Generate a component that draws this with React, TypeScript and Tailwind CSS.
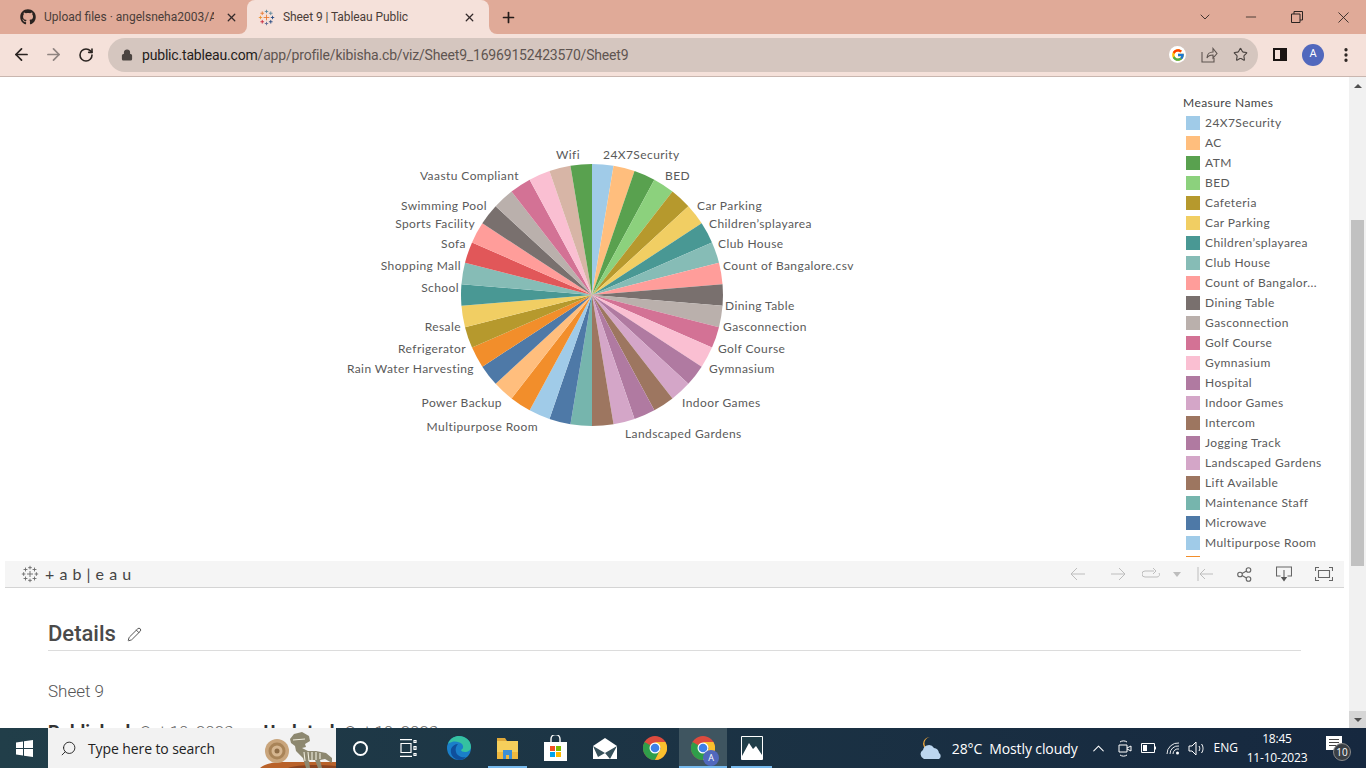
import { ArrowLeft, ArrowRight, RotateCw, Lock, Star, ChevronDown, Minus, X, Plus, ChevronUp, Search, MoreVertical, Pencil } from "lucide-react";
import { FaGithub } from "react-icons/fa";
import { FcGoogle } from "react-icons/fc";

const legend = [
  ["24X7Security", "#a0cbe8"],
  ["AC", "#ffbe7d"],
  ["ATM", "#59a14f"],
  ["BED", "#8cd17d"],
  ["Cafeteria", "#b6992d"],
  ["Car Parking", "#f1ce63"],
  ["Children’splayarea", "#499894"],
  ["Club House", "#86bcb6"],
  ["Count of Bangalor...", "#ff9d9a"],
  ["Dining Table", "#79706e"],
  ["Gasconnection", "#bab0ac"],
  ["Golf Course", "#d37295"],
  ["Gymnasium", "#fabfd2"],
  ["Hospital", "#b07aa1"],
  ["Indoor Games", "#d4a6c8"],
  ["Intercom", "#9d7660"],
  ["Jogging Track", "#b07aa1"],
  ["Landscaped Gardens", "#d4a6c8"],
  ["Lift Available", "#9d7660"],
  ["Maintenance Staff", "#76b5ad"],
  ["Microwave", "#4e79a7"],
  ["Multipurpose Room", "#a0cbe8"],
  ["", "#f28e2b"],
];

// clockwise from 12 o'clock, all slices equal
const slices = [
  "#a0cbe8", "#ffbe7d", "#59a14f", "#8cd17d", "#b6992d", "#f1ce63", "#499894", "#86bcb6", "#ff9d9a", "#79706e",
  "#bab0ac", "#d37295", "#fabfd2", "#b07aa1", "#d4a6c8", "#9d7660", "#b07aa1", "#d4a6c8", "#9d7660", "#76b5ad",
  "#4e79a7", "#a0cbe8", "#f28e2b", "#ffbe7d", "#4e79a7", "#f28e2b", "#b6992d", "#f1ce63", "#499894", "#86bcb6",
  "#e15759", "#ff9d9a", "#79706e", "#bab0ac", "#d37295", "#fabfd2", "#d7b5a6", "#59a14f",
];

const labels: [string, number, number, "start" | "end"][] = [
  ["24X7Security", 603, 155, "start"],
  ["BED", 665, 176, "start"],
  ["Car Parking", 697, 206, "start"],
  ["Children’splayarea", 709, 224, "start"],
  ["Club House", 718, 244, "start"],
  ["Count of Bangalore.csv", 723, 266, "start"],
  ["Dining Table", 725, 306, "start"],
  ["Gasconnection", 723, 327, "start"],
  ["Golf Course", 718, 349, "start"],
  ["Gymnasium", 709, 369, "start"],
  ["Indoor Games", 682, 403, "start"],
  ["Landscaped Gardens", 625, 434, "start"],
  ["Wifi", 580, 155, "end"],
  ["Vaastu Compliant", 519, 176, "end"],
  ["Swimming Pool", 487, 206, "end"],
  ["Sports Facility", 475, 224, "end"],
  ["Sofa", 466, 244, "end"],
  ["Shopping Mall", 461, 266, "end"],
  ["School", 459, 288, "end"],
  ["Resale", 461, 327, "end"],
  ["Refrigerator", 466, 349, "end"],
  ["Rain Water Harvesting", 474, 369, "end"],
  ["Power Backup", 502, 403, "end"],
  ["Multipurpose Room", 538, 427, "end"],
];

function slicePath(i: number) {
  const cx = 252, cy = 155, r = 131;
  const a0 = (i / slices.length) * 2 * Math.PI;
  const a1 = ((i + 1) / slices.length) * 2 * Math.PI;
  const x0 = cx + r * Math.sin(a0), y0 = cy - r * Math.cos(a0);
  const x1 = cx + r * Math.sin(a1), y1 = cy - r * Math.cos(a1);
  return `M${cx} ${cy}L${x0} ${y0}A${r} ${r} 0 0 1 ${x1} ${y1}Z`;
}

function PieChart() {
  return (
    <svg width="530" height="310" viewBox="0 0 530 310" className="block font-['Lato',sans-serif] text-[12px] tracking-[0.42px]">
      {slices.map((c, i) => <path key={i} d={slicePath(i)} fill={c} />)}
      {labels.map(([t, x, y, a]) => (
        <text key={t} x={x - 340} y={y - 140 + 4} textAnchor={a} fill="#5a5a5a">{t}</text>
      ))}
    </svg>
  );
}

function TableauMark({ size, color }: { size: number; color?: string }) {
  const crosses: [number, number, number, string][] = [
    [12, 12, 4, "#e8762d"], [12, 3.5, 2.4, "#59879b"], [12, 20.5, 2.4, "#5b6591"],
    [3.5, 12, 2.4, "#eb912c"], [20.5, 12, 2.4, "#1f447e"], [6, 6, 2.6, "#e8762d"],
    [18, 6, 2.6, "#59879b"], [6, 18, 2.6, "#c72035"], [18, 18, 2.6, "#1f447e"],
  ];
  return (
    <svg width={size} height={size} viewBox="0 0 24 24">
      {crosses.map(([x, y, s, c], i) => (
        <path key={i} d={`M${x - s} ${y}H${x + s}M${x} ${y - s}V${y + s}`} stroke={color ?? c} strokeWidth="1.2" />
      ))}
    </svg>
  );
}

function ChromeBar() {
  return (
    <div className="shrink-0 font-['Roboto',sans-serif]">
      <div className="h-[34px] bg-[#e0aa98] flex items-end">
        <div className="w-[247px] h-[34px] flex items-center pl-[20px] text-[#4a3d38]">
          <FaGithub className="text-[16px] text-[#2a2320] shrink-0" />
          <span className="w-[170px] ml-[8px] text-[12px] whitespace-nowrap overflow-hidden">Upload files · angelsneha2003/A</span>
          <X size={13} strokeWidth={2.4} className="ml-[11px] text-[#33292a]" />
        </div>
        <div className="relative w-[242px] h-[34px] bg-[#f5e1da] rounded-t-lg flex items-center pl-[11px] text-[#4a3d38]">
          <div className="absolute -left-2 bottom-0 w-2 h-2 bg-[#f5e1da]"><div className="w-2 h-2 bg-[#e0aa98] rounded-br-lg" /></div>
          <div className="absolute -right-2 bottom-0 w-2 h-2 bg-[#f5e1da]"><div className="w-2 h-2 bg-[#e0aa98] rounded-bl-lg" /></div>
          <TableauMark size={17} />
          <span className="ml-[8px] w-[180px] text-[12px] tracking-[-0.08px] whitespace-nowrap">Sheet 9 | Tableau Public</span>
          <X size={13} strokeWidth={2.4} className="text-[#33292a]" />
        </div>
        <div className="h-[34px] ml-[11px] flex items-center">
          <Plus size={17} strokeWidth={2.4} className="text-[#241c1a]" />
        </div>
        <div className="ml-auto h-[34px] flex items-center text-[#2a2320]">
          <div className="w-[46px] flex justify-center"><ChevronDown size={16} strokeWidth={1.3} /></div>
          <div className="w-[46px] flex justify-center"><Minus size={16} strokeWidth={1.2} /></div>
          <div className="w-[46px] flex justify-center">
            <svg width="12" height="12" viewBox="0 0 12 12" fill="none" stroke="currentColor"><path d="M.5 3h8.500v8.500H.5zM3 3V.5h8.500V9H9" /></svg>
          </div>
          <div className="w-[46px] flex justify-center"><X size={19} strokeWidth={1.1} /></div>
        </div>
      </div>
      <div className="h-[43px] bg-[#f5e1da] border-b border-[#c9b6af] flex items-center pb-[1px] text-[#2a2320]">
        <ArrowLeft size={19} strokeWidth={2.2} className="ml-[12px]" />
        <ArrowRight size={19} strokeWidth={2.2} className="ml-[13px] text-[#8f8480]" />
        <RotateCw size={16} strokeWidth={2.4} className="ml-[15px]" />
        <div className="ml-[14px] w-[1150px] h-[34px] rounded-full bg-[#d5c6bf] flex items-center">
          <Lock size={12} strokeWidth={2.4} fill="#4b4441" className="ml-[13px] text-[#4b4441]" />
          <span className="ml-[9px] pt-[1px] text-[14px] tracking-[-0.18px] whitespace-nowrap text-[#5f5551]"><span className="text-[#241c1a]">public.tableau.com</span>/app/profile/kibisha.cb/viz/Sheet9_16969152423570/Sheet9</span>
          <div className="ml-auto flex items-center">
            <div className="w-[17px] h-[17px] rounded-full bg-white flex items-center justify-center"><FcGoogle size={14} /></div>
            <svg width="17" height="16" viewBox="0 0 17 16" fill="none" stroke="#5f5551" strokeWidth="1.1" className="ml-[15px]"><path d="M1 5v10h12v-4M6 11c0-4 3-6 6-6V1.500l4 5-4 4.500V8c-3 0-5 1-6 3z" /></svg>
            <Star size={15} strokeWidth={1.8} className="ml-[15px] mr-[10px] text-[#4b4441]" />
          </div>
        </div>
        <div className="ml-[15px] w-[14px] h-[13px] border-[2px] border-[#1a1412] bg-[linear-gradient(to_right,#f5e1da_50%,#1a1412_50%)]" />
        <div className="ml-[15px] w-[22px] h-[22px] rounded-full bg-[#5168bd] text-white text-[11px] flex items-center justify-center">A</div>
        <MoreVertical size={18} strokeWidth={2.4} className="ml-[13px]" />
      </div>
    </div>
  );
}

function Legend() {
  return (
    <div className="w-[166px] h-[480px] overflow-hidden font-['Lato',sans-serif] text-[12px] tracking-[0.42px] text-[#5a5a5a]">
      <div className="h-[16px] mt-[18px] leading-[16px] text-[#444444]">Measure Names</div>
      <div className="mt-[2px]">
        {legend.map(([name, c]) => (
          <div key={c + name} className="h-[20px] flex items-center pl-[3px]">
            <div className="w-[14px] h-[14px] shrink-0" style={{ backgroundColor: c }} />
            <span className="ml-[5px] whitespace-nowrap">{name}</span>
          </div>
        ))}
      </div>
    </div>
  );
}

function VizToolbar() {
  const dim = "#bdbdbd";
  return (
    <div className="mx-[5px] h-[27px] bg-[#f5f5f5] border-b border-[#d4d4d4] flex items-center">
      <div className="ml-[16px]"><TableauMark size={18} color="#6b6b6b" /></div>
      <span className="ml-[6px] font-['Lato',sans-serif] text-[16px] tracking-[0.5px] text-[#444444] whitespace-nowrap">+ a b | e a u</span>
      <div className="ml-auto flex items-center">
        <svg width="16" height="14" viewBox="0 0 16 14" fill="none" stroke={dim}><path d="M15 7H1M7 1 1 7l6 6" /></svg>
        <svg width="16" height="14" viewBox="0 0 16 14" fill="none" stroke={dim} className="ml-[24px]"><path d="M1 7h14M9 1l6 6-6 6" /></svg>
        <svg width="18" height="14" viewBox="0 0 18 14" fill="none" stroke={dim} className="ml-[16px]"><path d="M12 4H3a2.500 2.500 0 0 0 0 6h12a2.500 2.500 0 0 0 2-4M11 1l3 3-3 3" /></svg>
        <svg width="8" height="5" viewBox="0 0 8 5" fill={dim} className="ml-[13px]"><path d="M0 0h8L4 5z" /></svg>
        <svg width="16" height="14" viewBox="0 0 16 14" fill="none" stroke={dim} className="ml-[16px]"><path d="M1 0v14M16 7H3M8 2 3 7l5 5" /></svg>
        <svg width="15" height="15" viewBox="0 0 15 15" fill="none" stroke="#666666" strokeWidth="1.1" className="ml-[24px]"><circle cx="11.500" cy="3" r="2.300" /><circle cx="11.500" cy="12" r="2.300" /><circle cx="3" cy="7.500" r="2.300" /><path d="m5 6.500 4.500-2.500M5 8.500l4.500 2.500" /></svg>
        <svg width="16" height="16" viewBox="0 0 16 16" fill="none" stroke="#666666" strokeWidth="1.1" className="ml-[24px]"><path d="M4.500 10H.5V1h15v9h-4M8 4v8" /><path d="M4.800 11h6.400L8 15.500z" fill="#555555" stroke="none" /></svg>
        <svg width="18" height="14" viewBox="0 0 18 14" fill="none" stroke="#666666" strokeWidth="1.1" className="ml-[23px] mr-[11px]"><path d="M.5 4V.5H4M14 .5h3.500V4M17.500 10v3.500H14M4 13.500H.5V10M3.500 3.500h11v7h-11z" /></svg>
      </div>
    </div>
  );
}

function Details() {
  return (
    <div className="px-[48px] font-['Roboto',sans-serif]">
      <div className="h-[63px] border-b border-[#dcdcdc] flex items-end pb-[1px]">
        <span className="text-[22px] leading-[30px] font-medium text-[#4a4a4a]">Details</span>
        <Pencil size={15} strokeWidth={1.6} className="ml-[11px] mb-[7px] text-[#555555]" />
      </div>
      <div className="mt-[30px] text-[17px] leading-[20px] font-light text-[#555555]">Sheet 9</div>
      <div className="mt-[21px] text-[17px] leading-[20px] whitespace-nowrap text-[#666666] font-light">
        <span className="text-[18px] tracking-[0.2px] font-bold text-[#333333]">Published:</span> Oct 10, 2023
        <span className="ml-[30px] text-[18px] tracking-[0.5px] font-bold text-[#333333]">Updated:</span> Oct 10, 2023
      </div>
    </div>
  );
}

function Scrollbar() {
  return (
    <div className="w-[17px] shrink-0 bg-[#f1f1f1] flex flex-col">
      <div className="h-[17px] flex items-center justify-center">
        <div className="w-0 h-0 border-x-[4px] border-x-transparent border-b-[4px] border-b-[#505050]" />
      </div>
      <div className="flex-1 pt-[126px] pb-[145px] pl-[2px] pr-[2px]">
        <div className="h-full bg-[#c1c1c1]" />
      </div>
      <div className="h-[17px] bg-[#d6d6d6] flex items-center justify-center">
        <div className="w-0 h-0 border-x-[4px] border-x-transparent border-t-[4px] border-t-[#505050]" />
      </div>
    </div>
  );
}

function ChromeIcon({ size }: { size: number }) {
  return (
    <svg width={size} height={size} viewBox="0 0 24 24">
      <circle cx="12" cy="12" r="12" fill="#dd4b3e" />
      <path d="M12 12 1.600 6A12 12 0 0 0 12 24l6-12z" fill="#2f9e4a" />
      <path d="M12 6h10.400A12 12 0 0 1 12 24l6-12z" fill="#fbc02d" />
      <circle cx="12" cy="12" r="5.500" fill="#fff" />
      <circle cx="12" cy="12" r="4.300" fill="#3f80e8" />
    </svg>
  );
}

function Dino() {
  return (
    <svg width="76" height="36" viewBox="0 0 76 36" className="block">
      <path d="M0 36c6-5 14-6 24-6h52v6z" fill="#b9622a" />
      <path d="M28 36c8-3 26-4 48-2v2z" fill="#8a4420" />
      <circle cx="17" cy="19" r="12" fill="#c9a57c" />
      <circle cx="17" cy="19" r="8.500" fill="#a98458" />
      <circle cx="17" cy="19" r="5.500" fill="#d6b690" />
      <circle cx="17" cy="19" r="2.500" fill="#8f6d47" />
      <path d="M30 7l4-5 8-2 7 4 1 5-5 3 1 3-4 1 6 3h8l10 2 6 5v5l-7-4-5 1 2 8h-4l-3-8-6 0 1 8h-4l-3-10-7-7-1-5-4-3z" fill="#8d8870" />
      <path d="M44 20l1 9M48 20l1 9M52 20l0 8M56 20l0 8M60 21l0 6" stroke="#efedde" strokeWidth="1.1" />
      <path d="M33 8l12-1" stroke="#efedde" strokeWidth="1" />
    </svg>
  );
}

function TaskIcon({ w, active, line, children }: { w: string; active?: boolean; line?: string; children: React.ReactNode }) {
  return (
    <div className={`relative h-[40px] flex items-center justify-center ${w} ${active ? "bg-[#3f5560]" : ""}`}>
      {children}
      {line && <div className={`absolute bottom-0 h-[2px] bg-[#76b9ed] ${line}`} />}
    </div>
  );
}

function Taskbar() {
  return (
    <div className="shrink-0 h-[40px] bg-gradient-to-r from-[#213e49] to-[#16283f] flex items-center text-white font-['Open_Sans',sans-serif] relative">
      <div className="w-[48px] flex justify-center">
        <svg width="17" height="17" viewBox="0 0 17 17" fill="#ffffff"><path d="M0 2.400 7 1.400v6.600H0zM8 1.300 17 0v8H8zM0 9h7v6.600l-7-1zM8 9h9v8l-9-1.300z" /></svg>
      </div>
      <div className="w-[288px] h-[40px] bg-[#f2f2f2] flex items-center overflow-hidden text-[#222222]">
        <Search size={17} strokeWidth={1.3} className="ml-[12px] -scale-x-100" />
        <span className="ml-[11px] text-[14px] tracking-[-0.1px] whitespace-nowrap">Type here to search</span>
        <div className="ml-auto self-end"><Dino /></div>
      </div>
      <TaskIcon w="w-[48px]"><div className="w-[15px] h-[15px] rounded-full border-[2px] border-white" /></TaskIcon>
      <TaskIcon w="w-[48px]">
        <svg width="18" height="18" viewBox="0 0 18 18" fill="none" stroke="#ffffff" strokeWidth="1.2"><path d="M1 .7h12M1 17.300h12M2 4.500h10v9H2zM15 1.500h2v2h-2zM15 7.500h2v3h-2zM15 14.500h2v2h-2z" /></svg>
      </TaskIcon>
      <div className="w-[3px]" />
      <TaskIcon w="w-[48px]">
        <svg width="24" height="24" viewBox="0 0 24 24">
          <circle cx="12" cy="12" r="12" fill="#1a7fc9" />
          <path d="M1 8C3 2 8 0 12 0c6 0 12 4 12 11 0 3-3 5-6 5-2 0-4-1-4-2 2-1 3-3 1-6-2-2-7-3-10-2-2 .5-3 1-4 2z" fill="#35c1a0" />
          <path d="M12 24c-6-1-9-6-8-11 1-3 4-5 7-5-2 2-3 5-2 8 1 4 6 6 10 5-2 2-4 3-7 3z" fill="#0f4f9c" />
        </svg>
      </TaskIcon>
      <TaskIcon w="w-[48px]" line="left-[5px] w-[39px]">
        <svg width="23" height="24" viewBox="0 0 23 24">
          <path d="M1 2h8l2 3H1z" fill="#e0a93a" />
          <path d="M1 5h21v18H1z" fill="#f6cf5b" />
          <path d="M1 16h21v7H1z" fill="#efb93f" />
          <path d="M7 14h9v9h-3v-4h-3v4H7z" fill="#3c8fd6" />
        </svg>
      </TaskIcon>
      <TaskIcon w="w-[49px]">
        <svg width="23" height="26" viewBox="0 0 23 26">
          <path d="M0 7h23v19H0z" fill="#ffffff" />
          <path d="M7 7V4a4.500 4.500 0 0 1 9 0v3" fill="none" stroke="#ffffff" strokeWidth="1.4" />
          <path d="M6 11h5v5H6z" fill="#f25022" /><path d="M12 11h5v5h-5z" fill="#7fba00" /><path d="M6 17h5v5H6z" fill="#00a4ef" /><path d="M12 17h5v5h-5z" fill="#ffb900" />
        </svg>
      </TaskIcon>
      <TaskIcon w="w-[50px]">
        <svg width="24" height="21" viewBox="0 0 24 21">
          <path d="M0 8 12 0l12 8v13H0z" fill="#ffffff" />
          <path d="M0 8l12 7 12-7-7 13-5-6-7 4z" fill="#213e49" opacity="0.9" />
        </svg>
      </TaskIcon>
      <TaskIcon w="w-[49px]"><ChromeIcon size={24} /></TaskIcon>
      <TaskIcon w="w-[48px]" active line="left-0 w-[48px]">
        <div className="relative">
          <ChromeIcon size={24} />
          <div className="absolute -right-[4px] -bottom-[6px] w-[16px] h-[16px] rounded-full bg-[#5168bd] text-[9px] flex items-center justify-center">A</div>
        </div>
      </TaskIcon>
      <TaskIcon w="w-[48px]" line="left-[4px] w-[41px]">
        <svg width="22" height="24" viewBox="0 0 22 24" className="ml-[1px]">
          <path d="M.5.5h21v23H.5z" fill="#213e49" stroke="#ffffff" />
          <path d="M1 20 8 7l4 6 3-3 6 9v4H1z" fill="#ffffff" />
        </svg>
      </TaskIcon>

      <div className="ml-auto flex items-center h-[40px]">
        <svg width="25" height="23" viewBox="0 0 25 23" className="mr-[8px]">
          <path d="M11 0a7 7 0 0 0-7 7 7 7 0 0 0 9 6 6 6 0 0 1-2-13z" fill="#f2a93b" />
          <path d="M5 22a5 5 0 0 1-1-9 6 6 0 0 1 11-2 6 6 0 0 1 5 5 3.500 3.500 0 0 1 0 6z" fill="#bcd6ef" />
        </svg>
        <span className="text-[14px] tracking-[-0.1px] whitespace-nowrap">28°C</span>
        <span className="ml-[7px] text-[14px] tracking-[-0.1px] whitespace-nowrap">Mostly cloudy</span>
        <ChevronUp size={19} strokeWidth={1.3} className="ml-[11px]" />
        <svg width="14" height="17" viewBox="0 0 14 17" fill="none" stroke="#ffffff" className="ml-[10px]"><path d="M2 2c2-1.500 5-1.500 7 0M2 15c2 1.500 5 1.500 7 0M1 5h8v7H1zM9 8l4-2v5l-4-2" /></svg>
        <svg width="16" height="10" viewBox="0 0 16 10" fill="none" stroke="#ffffff" className="ml-[9px]"><path d="M.5.5h13v9H.5zM14.500 3.500v3" /><path d="M2 2h4v6H2z" fill="#ffffff" stroke="none" /></svg>
        <svg width="14" height="13" viewBox="0 0 14 13" fill="none" stroke="#ffffff" strokeWidth="0.9" className="ml-[9px]"><path d="M1 12A11 11 0 0 1 13 1M4 12a8 8 0 0 1 9-8M7 12a5 5 0 0 1 6-5" /><circle cx="11.500" cy="11" r="1.500" fill="#ffffff" stroke="none" /></svg>
        <svg width="17" height="15" viewBox="0 0 17 15" fill="none" stroke="#ffffff" className="ml-[8px]"><path d="M1 5h3l4-4v13l-4-4H1zM11 5c1 1.500 1 3.500 0 5M13.500 3c2 2.500 2 6.500 0 9" /></svg>
        <span className="ml-[9px] text-[12px] whitespace-nowrap">ENG</span>
        <div className="ml-[1px] w-[76px] text-[12px] leading-[19px] tracking-[-0.2px] text-center whitespace-nowrap">
          <div>18:45</div>
          <div>11-10-2023</div>
        </div>
        <div className="relative ml-[11px] mr-[24px] w-[16px] h-[14px] bg-white mb-[10px]">
          <div className="absolute left-[3px] top-[3px] w-[10px] h-[1px] bg-[#444444]" />
          <div className="absolute left-[3px] top-[6px] w-[10px] h-[1px] bg-[#444444]" />
          <div className="absolute left-[3px] top-[9px] w-[7px] h-[1px] bg-[#444444]" />
          <div className="absolute -right-[9px] top-[7px] w-[18px] h-[18px] rounded-full bg-[#3a3f45] border border-[#8a8a8a] text-[10px] flex items-center justify-center">10</div>
        </div>
      </div>
    </div>
  );
}

export default function App() {
  return (
    <div className="w-[1366px] h-[768px] flex flex-col overflow-hidden bg-white">
      <ChromeBar />
      <div className="flex-1 min-h-0 flex">
        <div className="flex-1 min-w-0 overflow-hidden">
          <div className="h-[484px] flex">
            <div className="flex-1 pl-[340px] pt-[63px]"><PieChart /></div>
            <Legend />
          </div>
          <VizToolbar />
          <Details />
        </div>
        <Scrollbar />
      </div>
      <Taskbar />
    </div>
  );
}
